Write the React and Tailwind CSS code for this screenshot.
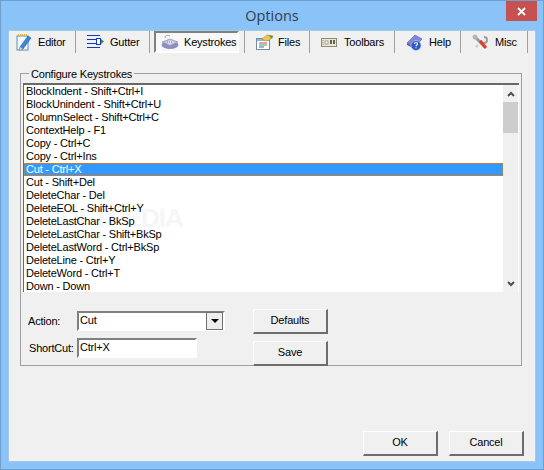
const KEYS = [
  'BlockIndent - Shift+Ctrl+I',
  'BlockUnindent - Shift+Ctrl+U',
  'ColumnSelect - Shift+Ctrl+C',
  'ContextHelp - F1',
  'Copy - Ctrl+C',
  'Copy - Ctrl+Ins',
  'Cut - Ctrl+X',
  'Cut - Shift+Del',
  'DeleteChar - Del',
  'DeleteEOL - Shift+Ctrl+Y',
  'DeleteLastChar - BkSp',
  'DeleteLastChar - Shift+BkSp',
  'DeleteLastWord - Ctrl+BkSp',
  'DeleteLine - Ctrl+Y',
  'DeleteWord - Ctrl+T',
  'Down - Down',
]

function EditorIcon() {
  return (
    <svg width="16" height="18" viewBox="0 0 16 18">
      <rect x="1" y="3" width="11" height="14" fill="#f4f8fc" stroke="#5a8fc0" />
      <path d="M2 2h9" stroke="#d8b040" strokeWidth="2" strokeDasharray="1 1" />
      <path d="M4 14 L12 3 L15 5 L7 16 L3 17 Z" fill="#3d86d6" stroke="#1f5ca8" strokeWidth="0.6" />
      <path d="M3 17l1-3 3 2z" fill="#f0d090" />
    </svg>
  )
}

function GutterIcon() {
  return (
    <svg width="18" height="14" viewBox="0 0 18 14">
      <path d="M0 0.5h13M0 4.500h9M0 8.500h9M0 12.500h13" stroke="#1438b8" />
      <rect x="9.500" y="3.500" width="4" height="6" fill="#fff" stroke="#1438b8" />
      <path d="M14 4l3 2.500-3 2.500z" fill="#2f8f3a" />
    </svg>
  )
}

function KeyboardIcon() {
  return (
    <svg width="18" height="16" viewBox="0 0 18 16">
      <path d="M4 4c0-3 3-3 5-2" stroke="#9a9aa8" fill="none" />
      <ellipse cx="9" cy="11" rx="8.500" ry="4" fill="#8e8ec0" />
      <path d="M1 8l8-3 8 3-8 4z" fill="#c4c4e0" stroke="#70709c" strokeWidth="0.5" />
      <path d="M5 8l4-1.500 4 1.500-4 2z" fill="#ece0f0" />
      <path d="M6 8h6" stroke="#7070b0" strokeDasharray="1 1" />
    </svg>
  )
}

function FilesIcon() {
  return (
    <svg width="18" height="16" viewBox="0 0 18 16">
      <rect x="0.5" y="4.500" width="13" height="11" fill="#fff" stroke="#6c8cb0" />
      <rect x="1" y="5" width="12" height="2" fill="#8eb4dc" />
      <path d="M3 9h8" stroke="#d04040" />
      <path d="M3 11h8" stroke="#40a050" />
      <path d="M3 13h5" stroke="#4060c0" />
      <path d="M6 5l5-4 6 1-3 4-5 1z" fill="#e8c850" stroke="#a08020" strokeWidth="0.5" />
      <path d="M12 1l5 1-1 3z" fill="#5a9a40" />
    </svg>
  )
}

function ToolbarIcon() {
  return (
    <svg width="16" height="9" viewBox="0 0 16 9">
      <rect x="0.5" y="0.5" width="15" height="8" fill="#ebe8d8" stroke="#8c8c70" />
      <path d="M2 2v5" stroke="#8c8c70" strokeDasharray="1 1" />
      <rect x="4" y="3" width="3" height="3" fill="#fff" stroke="#808060" strokeWidth="0.7" />
      <rect x="9" y="2" width="2" height="4" fill="#606050" />
      <rect x="12" y="2" width="2" height="4" fill="#606050" />
    </svg>
  )
}

function HelpIcon() {
  return (
    <svg width="17" height="17" viewBox="0 0 17 17">
      <path d="M1 9L9 1l7 4-7 8z" fill="#8484d8" stroke="#5858b0" strokeWidth="0.6" />
      <path d="M1 9l8 4v2L1 11z" fill="#5c5cb8" />
      <circle cx="10" cy="11.500" r="5" fill="#2c58c8" stroke="#c4d0f0" strokeWidth="0.7" />
      <path d="M8.500 10c0-2 3-2 3 0 0 1-1.500 1-1.500 2.200M10 13.200v1" stroke="#fff" fill="none" strokeWidth="1.100" />
    </svg>
  )
}

function MiscIcon() {
  return (
    <svg width="16" height="16" viewBox="0 0 16 16">
      <path d="M2 2l11 11" stroke="#9a9a9a" strokeWidth="3" />
      <circle cx="3" cy="3" r="2.500" fill="#b8b8b8" />
      <path d="M12 3a3 3 0 1 1-3 3" stroke="#9c9c9c" strokeWidth="2" fill="none" />
      <path d="M8 7l6 7" stroke="#e04020" strokeWidth="3" />
      <path d="M6 11l-2 2" stroke="#c8c8c8" strokeWidth="2" />
    </svg>
  )
}

function Tab({ icon, label, className, iconClass }) {
  return (
    <div className={`flex items-center border-r border-[#a0a0a0] ${className}`}>
      <div className={`flex items-center justify-center ${iconClass}`}>{icon}</div>
      <span>{label}</span>
    </div>
  )
}

function WinButton({ children, className }) {
  return (
    <div className={`flex items-center justify-center border-t border-l border-t-white border-l-white border-b-2 border-r-2 border-b-[#6d6d6d] border-r-[#6d6d6d] bg-[#f0f0f0] pb-[1px] ${className}`}>
      {children}
    </div>
  )
}

export default function App() {
  return (
    <div className="flex h-[470px] w-[544px] flex-col overflow-hidden border border-[#6f9fcc] bg-[#8ac3f8] font-['Liberation_Sans',sans-serif] text-[11px] tracking-[-0.2px] text-black">
      {/* title bar */}
      <div className="relative flex h-[29px] shrink-0 items-center justify-center font-['Open_Sans',sans-serif] text-[14.5px] tracking-normal text-[#333f4d]">
        Options
        <div className="absolute right-0 top-0 mr-[6px] flex h-[20px] w-[31px] items-center justify-center bg-[#c75050]">
          <svg width="9" height="9" viewBox="0 0 9 9"><path d="M1 1l7 7M8 1l-7 7" stroke="#fff" strokeWidth="1.800" /></svg>
        </div>
      </div>

      <div className="mx-[7px] flex h-[432px] flex-col border border-[#a9c8e8] bg-[#f0f0f0]">
        {/* tabs */}
        <div className="flex h-[22px] shrink-0">
          <Tab icon={<EditorIcon />} label="Editor" className="w-[67px]" iconClass="ml-[7px] mr-[6px] w-[16px]" />
          <Tab icon={<GutterIcon />} label="Gutter" className="w-[74px]" iconClass="ml-[11px] mr-[5px]" />
          <div className="ml-[4px] flex h-[22px] w-[85px] items-center border-2 border-[#808080] border-b-white border-r-white bg-[#f8f8f8]">
            <div className="ml-[5px] mr-[5px]"><KeyboardIcon /></div>
            <span>Keystrokes</span>
          </div>
          <div className="w-[6px] border-r border-[#a0a0a0]" />
          <Tab icon={<FilesIcon />} label="Files" className="w-[65px]" iconClass="ml-[11px] mr-[4px]" />
          <Tab icon={<ToolbarIcon />} label="Toolbars" className="w-[85px]" iconClass="ml-[11px] mr-[7px]" />
          <Tab icon={<HelpIcon />} label="Help" className="w-[66px]" iconClass="ml-[11px] mr-[6px]" />
          <Tab icon={<MiscIcon />} label="Misc" className="w-[67px]" iconClass="ml-[11px] mr-[7px]" />
        </div>

        {/* group box */}
        <div className="relative ml-[11px] mt-[20px] flex h-[293px] w-[502px] shrink-0 flex-col border border-[#a0a0a0] pl-[2px] pt-[9px]">
          <span className="absolute left-[8px] top-[-7px] bg-[#f0f0f0] px-[2px] leading-[14px]">Configure Keystrokes</span>

          <div className="flex h-[209px] w-[496px] border-t-2 border-l border-[#696969] bg-white pr-[1px]">
            <div className="relative flex-1 overflow-hidden">
              {/* faint watermark behind the rows */}
              <span className="absolute left-[19px] top-[120px] whitespace-nowrap text-[26px] font-bold leading-[26px] tracking-[-1px] text-[#f6f6f6]">SOFTPEDIA</span>
              {KEYS.map((k, i) => (
                <div
                  key={k}
                  className={`relative h-[13px] whitespace-nowrap pl-[2px] leading-[13px] ${i === 6 ? 'bg-[#3399ff] text-white outline-1 -outline-offset-1 outline-dotted outline-[#d08030]' : ''}`}
                >
                  {k}
                </div>
              ))}
            </div>
            <div className="flex w-[15px] flex-col justify-between bg-[#f0f0f0]">
              <div>
                <div className="flex h-[17px] items-center justify-center">
                  <svg width="8" height="6" viewBox="0 0 8 6"><path d="M1 5l3-3 3 3" stroke="#505050" strokeWidth="2" fill="none" /></svg>
                </div>
                <div className="h-[31px] bg-[#cdcdcd]" />
              </div>
              <div className="flex h-[17px] items-center justify-center">
                <svg width="8" height="6" viewBox="0 0 8 6"><path d="M1 1l3 3 3-3" stroke="#505050" strokeWidth="2" fill="none" /></svg>
              </div>
            </div>
          </div>

          {/* form */}
          <div className="mt-[17px] flex">
            <div className="ml-[5px] flex w-[225px] flex-col pt-[2px]">
              <div className="flex h-[20px] items-center">
                <span className="w-[27px]">Action:</span>
                <div className="ml-[22px] flex h-[20px] w-[148px] border-2 border-[#808080] border-r-white border-b-white bg-white">
                  <span className="flex-1 pl-[1px] leading-[15px]">Cut</span>
                  <div className="my-[-1px] flex w-[17px] items-center justify-center border border-[#707070] bg-[#eee]">
                    <svg width="8" height="4" viewBox="0 0 8 4"><path d="M0 0h8L4 4z" fill="#000" /></svg>
                  </div>
                </div>
              </div>
              <div className="mt-[7px] flex h-[20px] items-center">
                <span className="w-[45px] pl-[1px]">ShortCut:</span>
                <div className="ml-[4px] h-[20px] w-[120px] border-2 border-[#808080] border-r-white border-b-white bg-white pl-[1px] leading-[15px]">
                  Ctrl+X
                </div>
              </div>
            </div>
            <div className="flex flex-col gap-[7px]">
              <WinButton className="h-[25px] w-[75px]">Defaults</WinButton>
              <WinButton className="h-[25px] w-[75px]">Save</WinButton>
            </div>
          </div>
        </div>

        {/* bottom buttons */}
        <div className="mt-auto mb-[5px] ml-[354px] flex gap-[11px]">
          <WinButton className="h-[25px] w-[75px]">OK</WinButton>
          <WinButton className="h-[25px] w-[75px]">Cancel</WinButton>
        </div>
      </div>
    </div>
  )
}
